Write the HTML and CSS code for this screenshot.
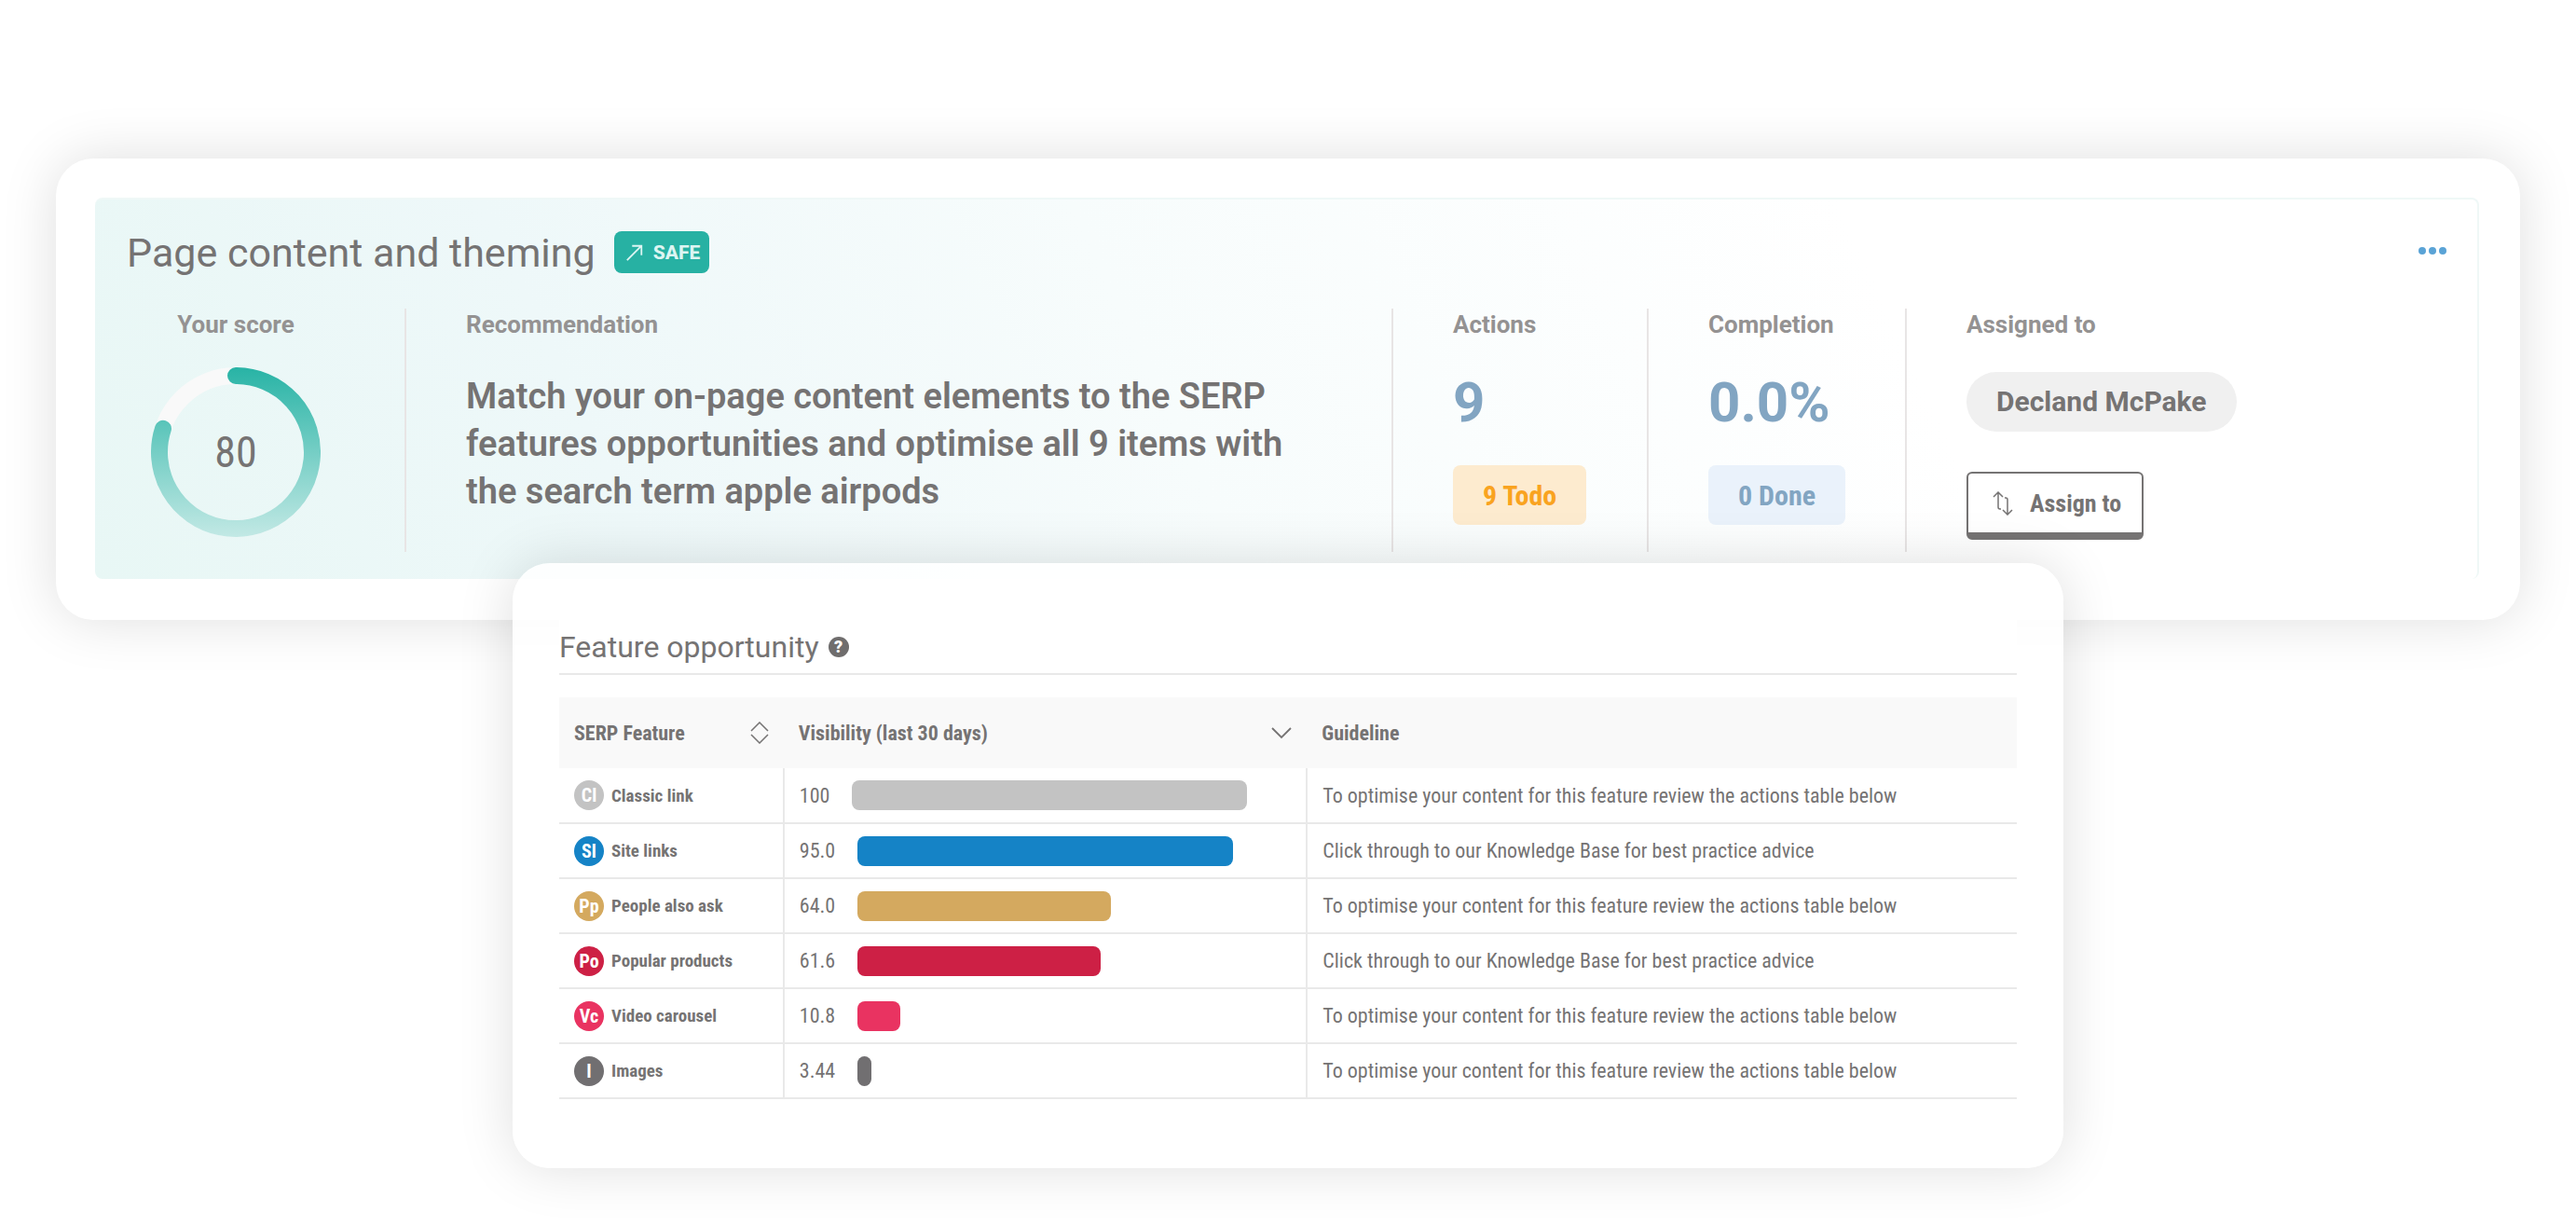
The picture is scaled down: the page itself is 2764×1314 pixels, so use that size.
FILE: index.html
```html
<!DOCTYPE html>
<html lang="en">
<head>
<meta charset="utf-8">
<meta name="viewport" content="width=device-width, initial-scale=1">
<title>Page content and theming</title>
<link rel="stylesheet" href="styles.css">
</head>
<body>
<main class="page">
  <section class="card summary">
    <div class="panel">
      <header class="panel-head">
        <h1 class="title">Page content and theming</h1>
        <span class="safe">
          <svg class="safe-icon" viewBox="0 0 22 22" aria-hidden="true"><path d="M2 20 19 3M8 3h11v11" fill="none" stroke="currentColor" stroke-width="2"/></svg>
          SAFE
        </span>
        <button class="more" type="button" aria-label="More options">
          <svg viewBox="0 0 32 10" aria-hidden="true"><circle cx="5" cy="5" r="4"/><circle cx="16" cy="5" r="4"/><circle cx="27" cy="5" r="4"/></svg>
        </button>
      </header>
      <div class="stats">
        <div class="stat score">
          <h2 class="label">Your score</h2>
          <div class="ring">
            <svg viewBox="0 0 182 184" aria-hidden="true">
              <defs><linearGradient id="ring-fill" gradientUnits="userSpaceOnUse" x1="0" y1="0" x2="0" y2="184"><stop offset="0" stop-color="#27b3a5"/><stop offset="1" stop-color="#c3e9e5"/></linearGradient></defs>
              <circle cx="91" cy="92" r="82" fill="none" stroke="#f9f9f9" stroke-width="18"/>
              <path d="M91 10A82 82 0 1 1 13 66.700" fill="none" stroke="url(#ring-fill)" stroke-width="18" stroke-linecap="round"/>
            </svg>
            <span class="ring-value">80</span>
          </div>
        </div>
        <div class="stat">
          <h2 class="label">Recommendation</h2>
          <p class="advice">Match your on-page content elements to the SERP features opportunities and optimise all 9 items with the search term apple airpods</p>
        </div>
        <div class="stat">
          <h2 class="label">Actions</h2>
          <p class="figure">9</p>
          <span class="tag todo">9 Todo</span>
        </div>
        <div class="stat">
          <h2 class="label">Completion</h2>
          <p class="figure">0.0%</p>
          <span class="tag done">0 Done</span>
        </div>
        <div class="stat">
          <h2 class="label">Assigned to</h2>
          <p class="person">Decland McPake</p>
          <button class="assign" type="button">
            <svg class="assign-icon" viewBox="0 0 22 26" aria-hidden="true"><path d="M1 6 6 1l5 5M6 1v16q0 2 2 2h1M21 20l-5 5-5-5M16 25V9q0-2-2-2h-1" fill="none" stroke="currentColor" stroke-width="1.500"/></svg>
            Assign to
          </button>
        </div>
      </div>
    </div>
  </section>

  <section class="card features">
    <div class="sheet">
      <header class="sheet-head">
        <h2 class="sheet-title">Feature opportunity</h2>
        <button class="help" type="button" aria-label="Help">?</button>
      </header>
      <table class="grid">
        <colgroup><col class="col-feature"><col class="col-visibility"><col></colgroup>
        <thead>
          <tr>
            <th scope="col"><button class="sort" type="button">SERP Feature
              <svg class="sort-icon" viewBox="0 0 20 24" aria-hidden="true"><path d="M1 10 10 1l9 9M1 14l9 9 9-9" fill="none" stroke="currentColor" stroke-width="1.500"/></svg></button></th>
            <th scope="col"><button class="sort" type="button">Visibility (last 30 days)
              <svg class="chevron" viewBox="0 0 22 14" aria-hidden="true"><path d="M1 2l10 10L21 2" fill="none" stroke="currentColor" stroke-width="1.800"/></svg></button></th>
            <th scope="col">Guideline</th>
          </tr>
        </thead>
        <tbody>
          <tr>
            <td><span class="feature"><span class="chip classic">Cl</span>Classic link</span></td>
            <td><span class="meter">100<span class="track"><span class="bar classic" style="width:100%"></span></span></span></td>
            <td>To optimise your content for this feature review the actions table below</td>
          </tr>
          <tr>
            <td><span class="feature"><span class="chip site">Sl</span>Site links</span></td>
            <td><span class="meter">95.0<span class="track"><span class="bar site" style="width:95%"></span></span></span></td>
            <td>Click through to our Knowledge Base for best practice advice</td>
          </tr>
          <tr>
            <td><span class="feature"><span class="chip people">Pp</span>People also ask</span></td>
            <td><span class="meter">64.0<span class="track"><span class="bar people" style="width:64%"></span></span></span></td>
            <td>To optimise your content for this feature review the actions table below</td>
          </tr>
          <tr>
            <td><span class="feature"><span class="chip popular">Po</span>Popular products</span></td>
            <td><span class="meter">61.6<span class="track"><span class="bar popular" style="width:61.6%"></span></span></span></td>
            <td>Click through to our Knowledge Base for best practice advice</td>
          </tr>
          <tr>
            <td><span class="feature"><span class="chip video">Vc</span>Video carousel</span></td>
            <td><span class="meter">10.8<span class="track"><span class="bar video" style="width:10.8%"></span></span></span></td>
            <td>To optimise your content for this feature review the actions table below</td>
          </tr>
          <tr>
            <td><span class="feature"><span class="chip images">I</span>Images</span></td>
            <td><span class="meter">3.44<span class="track"><span class="bar images" style="width:3.44%"></span></span></span></td>
            <td>To optimise your content for this feature review the actions table below</td>
          </tr>
        </tbody>
      </table>
    </div>
  </section>
</main>
</body>
</html>
```

FILE: styles.css
```css
:root {
  --ink: #757373;
  --muted: #949292;
  --blue: #82a5c2;
  --line: #e9e9e9;
  --narrow: "Roboto Condensed", Roboto, sans-serif;
}

* { box-sizing: border-box; }

body {
  margin: 0;
  background: #fff;
  color: var(--ink);
  font-family: Roboto, sans-serif;
}

h1, h2, p { margin: 0; font-weight: 400; }

button {
  margin: 0;
  padding: 0;
  border: 0;
  background: none;
  color: inherit;
  font: inherit;
}

svg { display: block; }

.page { padding: 170px 60px 60px; }

.card {
  border-radius: 40px;
  box-shadow: 0 0 60px rgba(0, 0, 0, 0.13);
}

/* Summary card */
.summary {
  padding: 42px 44px 44px 42px;
  background: #fff;
}

.panel {
  padding: 34px 0 29px;
  border: 2px solid #eff8f7;
  border-width: 2px 2px 0 0;
  border-radius: 8px;
  background: linear-gradient(65deg, #e8f7f5, #eef8f9 22%, #f7fcfc 45%, #fff 75%);
}

.panel-head {
  display: flex;
  align-items: center;
  height: 45px;
  padding: 0 32px 0 34px;
}

.title { font-size: 43px; line-height: 48px; }

.safe {
  display: flex;
  align-items: center;
  gap: 10px;
  height: 45px;
  margin-left: 20px;
  padding: 0 10px 0 12px;
  border-radius: 8px;
  background: #27b1a3;
  color: #dcf5f2;
  font-size: 21px;
  font-weight: 800;
}

.safe-icon { width: 20px; height: 20px; }

.more {
  width: 32px;
  margin-left: auto;
  padding-bottom: 4px;
  color: #5aa3d6;
  fill: currentColor;
}

.stats {
  display: grid;
  grid-template-columns: 332fr 1059fr 274fr 277fr 614fr;
  margin-top: 38px;
}

.stat {
  height: 261px;
  padding-left: 64px;
}

.stat + .stat { border-left: 2px solid #e8e5e5; }

.score { padding: 0 30px 0 0; text-align: center; }

.label {
  padding-top: 2px;
  color: var(--muted);
  font-size: 26px;
  font-weight: 700;
  line-height: 30px;
}

.ring {
  display: grid;
  place-items: center;
  margin-top: 30px;
}

.ring > * { grid-area: 1 / 1; }

.ring svg { width: 182px; height: 184px; }

.ring-value { font-family: var(--narrow); font-size: 46px; }

.advice {
  max-width: 920px;
  margin-top: 37px;
  font-size: 38px;
  font-weight: 600;
  line-height: 51px;
}

.figure {
  margin-top: 33px;
  color: var(--blue);
  font-size: 60px;
  font-weight: 700;
  line-height: 72px;
}

.tag {
  display: inline-flex;
  align-items: center;
  height: 64px;
  margin-top: 31px;
  padding: 0 32px;
  border-radius: 8px;
  font-family: var(--narrow);
  font-size: 30px;
  font-weight: 700;
}

.todo { background: #fdebcf; color: #f9a31f; }
.done { background: #eaf2fb; color: var(--blue); }

.person {
  width: max-content;
  margin-top: 36px;
  padding: 0 32px;
  border-radius: 32px;
  background: #f0f0f0;
  font-size: 30px;
  font-weight: 700;
  line-height: 64px;
}

.assign {
  display: flex;
  align-items: center;
  gap: 18px;
  height: 73px;
  margin-top: 43px;
  padding: 0 22px 0 26px;
  border: 2px solid var(--ink);
  border-bottom-width: 8px;
  border-radius: 6px;
  background: #fff;
  font-family: var(--narrow);
  font-size: 26px;
  font-weight: 700;
}

.assign-icon { width: 22px; height: 26px; }

/* Feature table card */
.features {
  position: relative;
  max-width: 1664px;
  width: 63%;
  margin: -61px auto 0;
  padding: 42px 50px 74px;
  background: rgba(255, 255, 255, 0.85);
}

.sheet { background: #fff; }

.sheet-head {
  display: flex;
  align-items: center;
  gap: 10px;
  height: 78px;
  padding-top: 20px;
  border-bottom: 2px solid var(--line);
}

.sheet-title { font-size: 32px; line-height: 40px; }

.help {
  width: 22px;
  height: 22px;
  border-radius: 50%;
  background: #6f6d6d;
  color: #fff;
  font-size: 18px;
  font-weight: 900;
  line-height: 22px;
}

.grid {
  width: 100%;
  margin-top: 24px;
  border-collapse: collapse;
  table-layout: fixed;
  font-family: var(--narrow);
  font-size: 22px;
  text-align: left;
}

.col-feature { width: 15.4%; }
.col-visibility { width: 35.9%; }

.grid th, .grid td { padding: 0 16px; white-space: nowrap; }

.grid th {
  height: 76px;
  background: #f9f9f9;
  font-weight: 700;
}

.grid td { height: 59px; border-bottom: 2px solid var(--line); }
.grid td + td { border-left: 2px solid var(--line); }

.sort {
  display: flex;
  align-items: center;
  justify-content: space-between;
  width: 100%;
}

.sort-icon { width: 20px; height: 24px; }
.chevron { width: 22px; height: 14px; }

.feature {
  display: flex;
  align-items: center;
  gap: 8px;
  font-size: 19px;
  font-weight: 700;
}

.chip {
  width: 32px;
  height: 32px;
  border-radius: 50%;
  color: #fff;
  font-size: 20px;
  line-height: 32px;
  text-align: center;
}

.meter { display: flex; align-items: center; gap: 24px; }
.track { flex: 1; max-width: 424px; }

.bar { display: block; height: 32px; border-radius: 8px; }

.classic { background: #c3c3c3; }
.site { background: #1583c6; }
.people { background: #d4a95f; }
.popular { background: #cd2045; }
.video { background: #e93361; }
.images { background: #716f71; }
```
